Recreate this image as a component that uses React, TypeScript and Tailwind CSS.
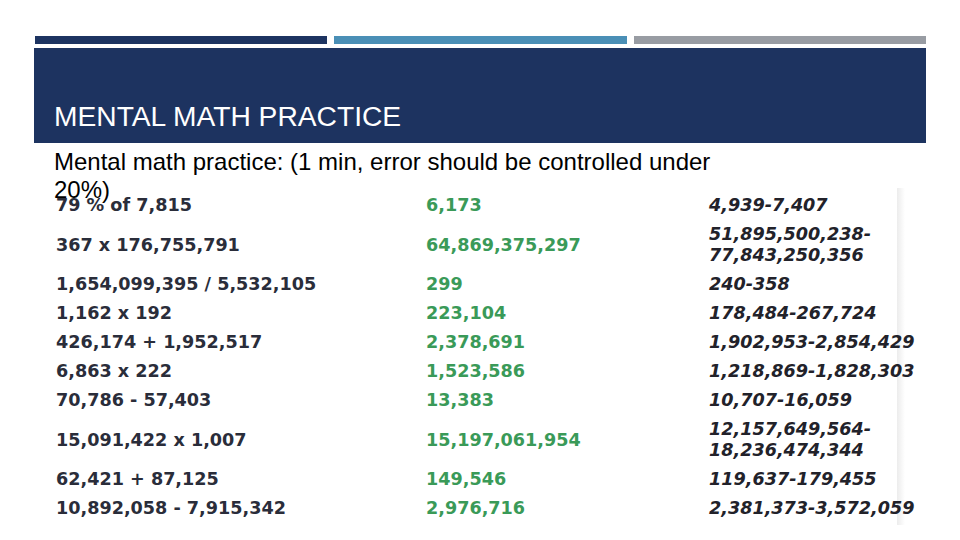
import React from "react";

type Row = { a: string; b: string; c: string[] };

const rows: Row[] = [
  { a: "79 % of 7,815", b: "6,173", c: ["4,939-7,407"] },
  { a: "367 x 176,755,791", b: "64,869,375,297", c: ["51,895,500,238-", "77,843,250,356"] },
  { a: "1,654,099,395 / 5,532,105", b: "299", c: ["240-358"] },
  { a: "1,162 x 192", b: "223,104", c: ["178,484-267,724"] },
  { a: "426,174 + 1,952,517", b: "2,378,691", c: ["1,902,953-2,854,429"] },
  { a: "6,863 x 222", b: "1,523,586", c: ["1,218,869-1,828,303"] },
  { a: "70,786 - 57,403", b: "13,383", c: ["10,707-16,059"] },
  { a: "15,091,422 x 1,007", b: "15,197,061,954", c: ["12,157,649,564-", "18,236,474,344"] },
  { a: "62,421 + 87,125", b: "149,546", c: ["119,637-179,455"] },
  { a: "10,892,058 - 7,915,342", b: "2,976,716", c: ["2,381,373-3,572,059"] },
];

export default function App() {
  return (
    <div className="w-[960px] h-[540px] bg-white overflow-hidden relative" style={{ fontFamily: '"Liberation Sans", Arial, sans-serif' }}>
      <div className="pt-[36px] pl-[35px] pr-[34px] flex gap-[7px]">
        <div className="h-[8px] flex-1 bg-[#1d3461]" />
        <div className="h-[8px] flex-1 bg-[#4a8fb6]" />
        <div className="h-[8px] flex-1 bg-[#989ca3]" />
      </div>
      <div className="mt-[4px] ml-[34px] mr-[34px] h-[95px] bg-[#1d3360] flex items-end pl-[20px] pb-[11px]">
        <div className="text-white text-[28.2px] leading-[32px]">MENTAL MATH PRACTICE</div>
      </div>
      <div className="mt-[5px] pl-[54px] h-[43px] relative z-10">
        <p className="text-black text-[24px] leading-[28px] w-[690px]">
          Mental math practice: (1 min, error should be controlled under 20%)
        </p>
      </div>
      <div className="relative ml-[56px] w-[870px]" style={{ fontFamily: '"DejaVu Sans", Verdana, sans-serif' }}>
        <div className="absolute left-[841px] top-[-3px] h-[337px] w-[8px] bg-gradient-to-r from-[#ececec] to-white" />
        {rows.map((r, i) => (
          <div key={i} className="relative flex items-center py-[4px] font-bold text-[17.6px] leading-[21px]">
            <div className="w-[370px] text-[#2a2d3a]">{r.a}</div>
            <div className="w-[283px] text-[#3a9a58]">{r.b}</div>
            <div className="italic text-[#22222a] whitespace-nowrap">
              {r.c.map((t, j) => (
                <div key={j}>{t}</div>
              ))}
            </div>
          </div>
        ))}
      </div>
    </div>
  );
}
